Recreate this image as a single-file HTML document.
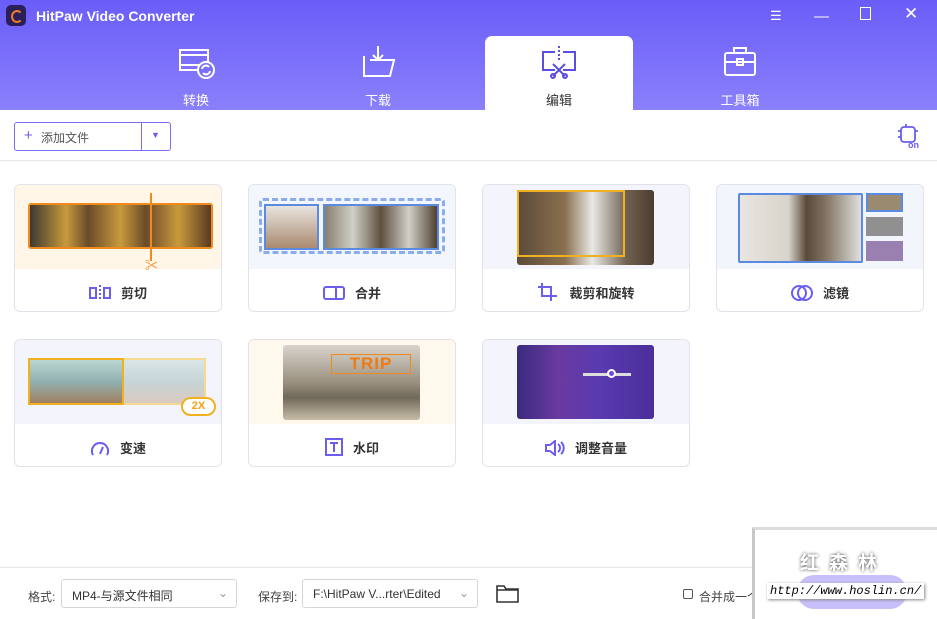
<!DOCTYPE html><html><head><meta charset="utf-8"><style>
*{box-sizing:border-box;margin:0;padding:0}
body{width:937px;height:619px;overflow:hidden;background:#fff;font-family:"Liberation Sans","Noto Sans CJK SC",sans-serif;position:relative}
.hdr{position:absolute;left:0;top:0;width:937px;height:110px;background:linear-gradient(#6a5df8,#8a80fb)}
.title{position:absolute;left:36px;top:8px;color:#fff;font-size:14px;font-weight:bold}
.logo{position:absolute;left:6px;top:5px;width:20px;height:21px;border-radius:5px;background:#2b1f5a}
.logo:after{content:"";position:absolute;left:5px;top:5px;width:8px;height:9px;border:2.5px solid #f07a2a;border-right-color:transparent;border-radius:50%}
.tab{position:absolute;top:36px;width:148px;height:74px;text-align:center;color:#fff;font-size:13px}
.tab span{position:absolute;left:0;right:0;top:54px}
.tab svg{position:absolute;left:56px;top:8px}
.act{background:#fff;border-radius:7px 7px 0 0;color:#333}
.wc{position:absolute;top:8px;color:#fff;font-size:15px}
.add{position:absolute;left:14px;top:122px;width:157px;height:29px;border:1px solid #7a6ef5;border-radius:3px;font-size:12px;color:#555}
.sep{position:absolute;left:0;width:937px;height:1px;background:#e6e6ec}
.card{position:absolute;width:208px;height:128px;border:1px solid #e2e2ea;border-radius:6px;overflow:hidden;background:#fff}
.card .im{height:84px;position:relative}
.card .lb{position:absolute;left:0;right:0;top:98px;text-align:center;font-size:13px;font-weight:bold;color:#333}
.lb svg{vertical-align:-3px;margin-right:10px}
.sel{position:absolute;top:579px;height:29px;border:1px solid #d6d6dd;border-radius:3px;font-size:12px;color:#333;padding:7px 10px}
.lbl{position:absolute;top:588px;font-size:12px;color:#444}
</style></head><body>
<div class="hdr"></div>
<div class="logo"></div>
<div class="title">HitPaw Video Converter</div>
<div class="wc" style="left:770px;font-size:13px">☰</div>
<div class="wc" style="left:814px">—</div>
<div class="wc" style="left:860px;top:7px;width:11px;height:13px;border:1.5px solid #fff"></div>
<div class="wc" style="left:904px;top:4px;font-size:17px">✕</div>
<div class="tab" style="left:122px"><svg width="38" height="36" fill="none" stroke="#fff" stroke-width="2"><rect x="2" y="6" width="28" height="20"/><path d="M2 11h28M2 21h28"/><circle cx="28" cy="26" r="8" fill="#7a6ff9"/><path d="M24 25a4 4 0 0 1 7-2M32 27a4 4 0 0 1-7 2"/></svg><span>转换</span></div>
<div class="tab" style="left:304px"><svg width="38" height="36" fill="none" stroke="#fff" stroke-width="2"><path d="M18 2v14M13 11l5 5 5-5"/><path d="M4 12v20h26l4-16H10"/></svg><span>下载</span></div>
<div class="tab act" style="left:485px"><svg width="38" height="36" fill="none" stroke="#5b4ee0" stroke-width="2"><path d="M14 8H2v18h12M22 8h12v18H22"/><path d="M18 2v14" stroke-dasharray="2 2"/><path d="M12 20l12 12M24 20L12 32"/><circle cx="12" cy="32" r="2"/><circle cx="24" cy="32" r="2"/></svg><span>编辑</span></div>
<div class="tab" style="left:666px"><svg width="38" height="36" fill="none" stroke="#fff" stroke-width="2"><rect x="3" y="9" width="30" height="22" rx="2"/><path d="M12 9V4h12v5M3 18h30"/><rect x="15" y="15" width="6" height="6"/></svg><span>工具箱</span></div>
<div class="add"><span style="position:absolute;left:9px;top:4px;color:#6a5df0;font-size:15px">+</span><span style="position:absolute;left:26px;top:6px">添加文件</span><div style="position:absolute;left:126px;top:0;width:1px;height:27px;background:#7a6ef5"></div><span style="position:absolute;left:136px;top:7px;font-size:9px;color:#6a5df0">▼</span></div>
<svg style="position:absolute;left:896px;top:123px" width="26" height="26" fill="none" stroke="#6a5df0" stroke-width="1.8"><rect x="5" y="4" width="14" height="15" rx="3"/><path d="M2 8h3M2 14h3M19 8h3M10 1v3"/><text x="12" y="25" font-size="9" fill="#6a5df0" stroke="none" font-family="Liberation Sans" font-weight="bold">on</text></svg>
<div class="sep" style="top:160px"></div>

<div class="card" style="left:14px;top:184px"><div class="im" style="background:#fff6e8"><div style="position:absolute;left:13px;top:18px;width:185px;height:46px;border:2px solid #f08a1c;border-radius:3px;background:linear-gradient(90deg,#3b3a30,#c99a3c 20%,#6a4a2a 32%,#c99a3c 50%,#6a4a2a 64%,#c99a3c 82%,#5a3a20)"></div><div style="position:absolute;left:135px;top:8px;width:2px;height:68px;background:#f08a1c"></div><div style="position:absolute;left:130px;top:70px;color:#f08a1c;font-size:13px">✂</div></div><div class="lb"><svg width="22" height="16" fill="none" stroke="#6a5df0" stroke-width="2"><rect x="1" y="3" width="6" height="10"/><rect x="15" y="3" width="6" height="10"/><path d="M11 0v16" stroke-dasharray="2 2"/></svg>剪切</div></div>
<div class="card" style="left:248px;top:184px"><div class="im" style="background:#f3f6fd"><div style="position:absolute;left:10px;top:13px;width:186px;height:56px;border:3px dashed #88acee;border-radius:4px"></div><div style="position:absolute;left:15px;top:19px;width:55px;height:46px;border:2px solid #5b8be0;background:linear-gradient(#e8e4de,#aa8a70)"></div><div style="position:absolute;left:74px;top:19px;width:116px;height:46px;border:2px solid #5b8be0;background:linear-gradient(90deg,#8a8070,#d0d0c8,#605040,#d0d0c8,#504030)"></div></div><div class="lb"><svg width="22" height="16" fill="none" stroke="#6a5df0" stroke-width="2"><rect x="1" y="2" width="20" height="12" rx="2"/><path d="M13 2v12"/></svg>合并</div></div>
<div class="card" style="left:482px;top:184px"><div class="im" style="background:#f4f4fc"><div style="position:absolute;left:34px;top:5px;width:137px;height:75px;border-radius:3px;background:linear-gradient(90deg,#5a4a38,#8a7050 35%,#e8e8e4 55%,#706050 80%,#4a3c30)"></div><div style="position:absolute;left:34px;top:5px;width:108px;height:67px;border:2px solid #f0b020"></div></div><div class="lb"><svg width="22" height="18" fill="none" stroke="#6a5df0" stroke-width="2"><path d="M5 0v13h15M1 4h13v14"/></svg>裁剪和旋转</div></div>
<div class="card" style="left:716px;top:184px"><div class="im" style="background:#f2f5fc"><div style="position:absolute;left:21px;top:8px;width:125px;height:70px;border:2px solid #5b8be0;border-radius:2px;background:linear-gradient(90deg,#e8e6e0,#d8d4cc 40%,#5a4a3a 55%,#807060 70%,#e0e0dc)"></div><div style="position:absolute;left:149px;top:8px;width:37px;height:19px;border:2px solid #5b8be0;background:#9a8a70"></div><div style="position:absolute;left:149px;top:32px;width:37px;height:19px;background:#909090"></div><div style="position:absolute;left:149px;top:56px;width:37px;height:20px;background:#9a80b0"></div></div><div class="lb"><svg width="22" height="16" fill="none" stroke="#6a5df0" stroke-width="2"><circle cx="8" cy="8" r="7"/><circle cx="14" cy="8" r="7"/></svg>滤镜</div></div>

<div class="card" style="left:14px;top:339px"><div class="im" style="background:#f4f4fc"><div style="position:absolute;left:13px;top:18px;width:178px;height:47px;border:2px solid #f5c84a;background:linear-gradient(#c8dcd8,#a8c0c0 50%,#c8b098);opacity:.6"></div><div style="position:absolute;left:13px;top:18px;width:96px;height:47px;border:2px solid #f0b020;background:linear-gradient(#bcd6d0,#90b0b0 50%,#a08060)"></div><div style="position:absolute;left:166px;top:57px;width:35px;height:19px;border:2px solid #f0b020;border-radius:10px;background:#fff;color:#f0a010;font-size:11px;font-weight:bold;text-align:center;line-height:15px">2X</div></div><div class="lb"><svg width="20" height="16" fill="none" stroke="#6a5df0" stroke-width="2"><path d="M3 15A8 8 0 0 1 10 3a8 8 0 0 1 7 12M10 14l3-7"/></svg>变速</div></div>
<div class="card" style="left:248px;top:339px"><div class="im" style="background:#fff8ec"><div style="position:absolute;left:34px;top:5px;width:137px;height:75px;border-radius:3px;background:linear-gradient(#d8d4cc,#9a9080 50%,#706858 70%,#c8bca8)"></div><div style="position:absolute;left:82px;top:14px;width:80px;height:20px;border:1px solid #f08a1c;color:#f07a10;font-weight:900;font-size:17px;text-align:center;line-height:18px;letter-spacing:1px">TRIP</div></div><div class="lb"><svg width="18" height="18" fill="none" stroke="#6a5df0" stroke-width="2"><rect x="1" y="1" width="16" height="16"/><path d="M5 5h8M9 5v9"/></svg>水印</div></div>
<div class="card" style="left:482px;top:339px"><div class="im" style="background:#f4f4fc"><div style="position:absolute;left:34px;top:5px;width:137px;height:74px;border-radius:3px;background:linear-gradient(90deg,#3a2a80,#6a3aa0 30%,#5a3ab0 60%,#4a2e9a)"></div><div style="position:absolute;left:100px;top:33px;width:48px;height:3px;background:#ddd"></div><div style="position:absolute;left:124px;top:29px;width:9px;height:9px;border-radius:50%;border:2px solid #fff;background:#6a4ae0"></div></div><div class="lb"><svg width="20" height="16" fill="none" stroke="#6a5df0" stroke-width="2"><path d="M1 5h4l5-4v14l-5-4H1zM13 4a5 5 0 0 1 0 8M16 2a8 8 0 0 1 0 12"/></svg>调整音量</div></div>

<div class="sep" style="top:567px"></div>
<div class="lbl" style="left:28px">格式:</div>
<div class="sel" style="left:61px;width:176px">MP4-与源文件相同<span style="position:absolute;right:8px;top:6px;color:#999">⌄</span></div>
<div class="lbl" style="left:258px">保存到:</div>
<div class="sel" style="left:302px;width:176px">F:\HitPaw V...rter\Edited<span style="position:absolute;right:8px;top:6px;color:#999">⌄</span></div>
<svg style="position:absolute;left:496px;top:584px" width="23" height="19" fill="none" stroke="#333" stroke-width="1.6"><path d="M1 2h7l2 3h12v13H1z M1 6h21"/></svg>
<div style="position:absolute;left:683px;top:589px;width:10px;height:10px;border:1px solid #555;border-radius:2px"></div>
<div class="lbl" style="left:699px">合并成一个文</div>
<div style="position:absolute;left:752px;top:527px;width:185px;height:92px;background:#fff;border-left:3px solid #c8c8c8;border-top:3px solid #ddd"></div>
<div style="position:absolute;left:800px;top:548px;color:#fff;font-size:19px;font-weight:bold;letter-spacing:10px;text-shadow:0 0 3px #444">红森林</div>
<div style="position:absolute;left:797px;top:575px;width:110px;height:34px;border-radius:17px;background:#c8c0fa"></div>
<div style="position:absolute;left:767px;top:583px;background:#fff;font-style:italic;font-size:12px;padding:1px 3px;color:#000;font-family:'Liberation Mono',monospace;box-shadow:1px 1px 3px #888">http://www.hoslin.cn/</div>
</body></html>
